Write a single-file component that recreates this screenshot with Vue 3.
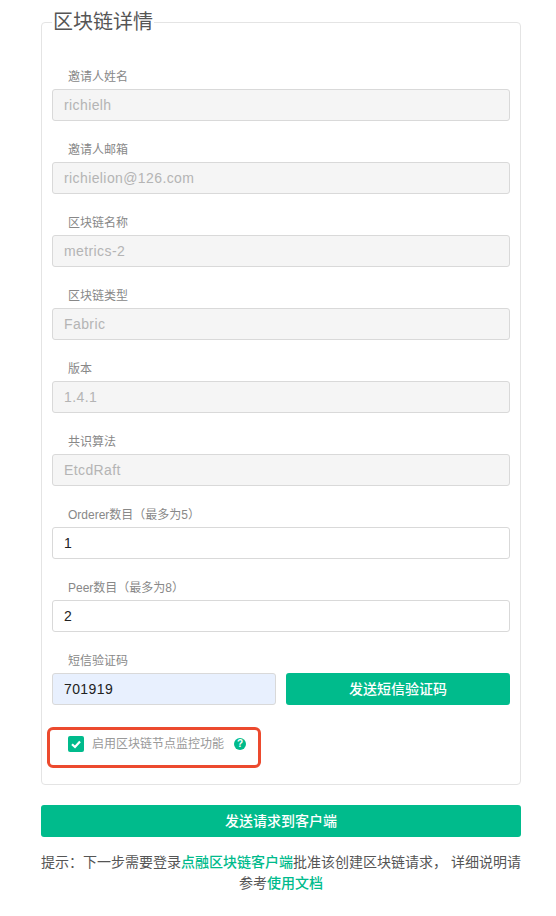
<template>
  <div class="page">
    <fieldset class="detail-box">
      <legend>区块链详情</legend>

      <div v-for="item in readonlyFields" :key="item.label" class="form-item">
        <label class="form-label">{{ item.label }}</label>
        <input class="form-input" :value="item.value" disabled />
      </div>

      <div class="form-item">
        <label class="form-label">Orderer数目（最多为5）</label>
        <input v-model="ordererCount" class="form-input" />
      </div>

      <div class="form-item">
        <label class="form-label">Peer数目（最多为8）</label>
        <input v-model="peerCount" class="form-input" />
      </div>

      <div class="form-item">
        <label class="form-label">短信验证码</label>
        <div class="sms-row">
          <input v-model="smsCode" class="form-input autofilled" />
          <button class="primary-btn" type="button">发送短信验证码</button>
        </div>
      </div>

      <div class="monitor-mark">
        <label class="monitor-check">
          <span class="check-box" :class="{ off: !monitorOn }" @click.prevent="monitorOn = !monitorOn">
            <svg v-if="monitorOn" viewBox="0 0 16 16" width="16" height="16">
              <path d="M4 8.2 L7 11 L12 5.4" fill="none" stroke="#fff" stroke-width="2.2" />
            </svg>
          </span>
          <span class="check-text">启用区块链节点监控功能</span>
        </label>
        <span class="help-dot">?</span>
      </div>
    </fieldset>

    <button class="primary-btn submit-btn" type="button">发送请求到客户端</button>

    <p class="hint">
      提示：下一步需要登录<a href="#" class="hint-link">点融区块链客户端</a>批准该创建区块链请求， 详细说明请参考<a href="#" class="hint-link">使用文档</a>
    </p>
  </div>
</template>

<script setup>
import { ref } from 'vue';

const readonlyFields = [
  { label: '邀请人姓名', value: 'richielh' },
  { label: '邀请人邮箱', value: 'richielion@126.com' },
  { label: '区块链名称', value: 'metrics-2' },
  { label: '区块链类型', value: 'Fabric' },
  { label: '版本', value: '1.4.1' },
  { label: '共识算法', value: 'EtcdRaft' }
];

const ordererCount = ref('1');
const peerCount = ref('2');
const smsCode = ref('701919');
const monitorOn = ref(true);
</script>

<style>
html,
body {
  margin: 0;
  background: #fff;
}
</style>

<style scoped>
.page {
  box-sizing: border-box;
  width: 556px;
  height: 916px;
  padding: 8px 35px 0 41px;
  font-family: "Liberation Sans", "Noto Sans CJK SC", sans-serif;
  color: #555;
}

.detail-box {
  box-sizing: border-box;
  width: 480px;
  height: 777px;
  margin: 0;
  padding: 0 10px;
  border: 1px solid #e4e4e4;
  border-radius: 4px;
  min-width: 0;
}

legend {
  padding: 0 1px;
  font-size: 20px;
  line-height: 28px;
  color: #555;
}

.form-item {
  margin-bottom: 21px;
}

.form-item:first-of-type {
  margin-top: 33px;
}

.form-label {
  display: block;
  height: 20px;
  padding-left: 16px;
  font-size: 12px;
  line-height: 16px;
  color: #888;
}

.form-input {
  display: block;
  box-sizing: border-box;
  width: 100%;
  height: 32px;
  padding: 0 11px;
  border: 1px solid #d9d9d9;
  border-radius: 3px;
  outline: none;
  background: #fff;
  font-family: inherit;
  font-size: 14px;
  letter-spacing: 0.4px;
  color: #222;
}

.form-input:disabled {
  background: #f5f5f5;
  color: #b4b4b4;
  -webkit-text-fill-color: #b4b4b4;
  opacity: 1;
}

.form-input.autofilled {
  background: #e8f0fe;
}

.sms-row {
  display: grid;
  grid-template-columns: 1fr 1fr;
  gap: 10px;
}

.primary-btn {
  height: 32px;
  padding: 0 0 2px;
  border: none;
  border-radius: 3px;
  background: #00bb8c;
  color: #fff;
  font-family: inherit;
  font-size: 14px;
  font-weight: 500;
  cursor: pointer;
}

.monitor-mark {
  display: flex;
  align-items: flex-start;
  box-sizing: border-box;
  width: 214px;
  height: 41px;
  margin: 22px 0 0 -5px;
  padding: 6px 0 0 18px;
  border: 3px solid #ec4a2e;
  border-radius: 6px;
}

.monitor-check {
  display: flex;
  align-items: center;
  cursor: pointer;
}

.check-box {
  display: block;
  width: 16px;
  height: 16px;
  border-radius: 2px;
  background: #00bb8c;
}

.check-box.off {
  background: #fff;
  box-shadow: inset 0 0 0 1px #d9d9d9;
}

.check-box svg {
  display: block;
}

.check-text {
  margin-left: 8px;
  font-size: 12px;
  line-height: 16px;
  color: #999;
}

.help-dot {
  width: 12px;
  height: 12px;
  margin: 2px 0 0 10px;
  border-radius: 50%;
  background: #00bb8c;
  color: #fff;
  font-size: 10px;
  font-weight: bold;
  line-height: 12px;
  text-align: center;
}

.submit-btn {
  display: block;
  width: 480px;
  margin-top: 20px;
}

.hint {
  margin: 15px 0 0;
  font-size: 14px;
  line-height: 21px;
  text-align: center;
  color: #555;
}

.hint-link {
  display: inline-block;
  color: #00bb8c;
  font-weight: 500;
  text-decoration: none;
}
</style>
